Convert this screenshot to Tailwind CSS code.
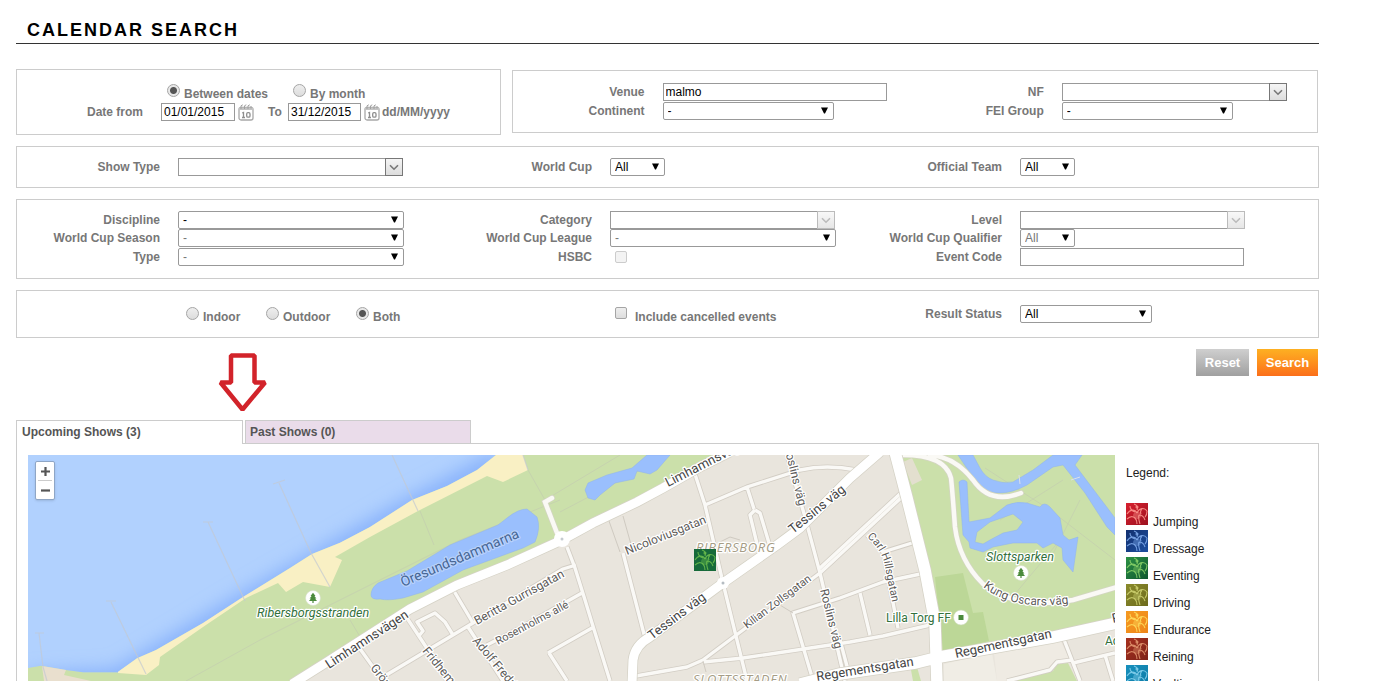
<!DOCTYPE html>
<html lang="en">
<head>
<meta charset="utf-8">
<meta name="viewport" content="width=device-width, initial-scale=1">
<title>Calendar Search</title>
<script src="https://cdn.jsdelivr.net/npm/@tailwindcss/browser@4"></script>
</head>
<body class="h-screen overflow-hidden bg-white pl-4 pr-[62px] font-['Liberation_Sans',Arial,sans-serif] text-xs text-black">

<!-- shared symbols -->
<svg class="hidden" aria-hidden="true">
  <symbol id="tri" viewBox="0 0 7 7"><path d="M0 .5h7L4 6.500H3z" fill="#000"/></symbol>
  <symbol id="chev" viewBox="0 0 10 7"><path d="M1 1.2l4 4 4-4" fill="none" stroke="currentColor" stroke-width="1.6"/></symbol>
  <symbol id="cal" viewBox="0 0 16 18">
    <rect x="1" y="4.500" width="14" height="12.500" rx="2" fill="#fff" stroke="#a8a8a8" stroke-width="1.300"/>
    <path d="M1 4.500h14v2.500H1z" fill="#c4c4c4"/>
    <path d="M3 6V2.800l1.800-1M6.500 6V2.800l1.800-1M10 6V2.800l1.800-1M13 5.500V3" fill="none" stroke="#a0a0a0" stroke-width="1"/>
    <path d="M4.200 10l1.300-.6V14.500M4 14.500h3" fill="none" stroke="#8e8e8e" stroke-width="1.300"/>
    <rect x="8.700" y="9.700" width="3.300" height="4.500" rx="1.200" fill="none" stroke="#8e8e8e" stroke-width="1.300"/>
  </symbol>
  <symbol id="rider" viewBox="0 0 22 22">
    <path d="M1 11C4 6 9 6 11 10M11 10C13 5 18 4 21 8M21 8c0 3-1 5-2 6M1 16c3-3 6-3 8-1s2 4 2 6M8 1c3 1 4 3 3 6M4 3c0 3 2 5 5 6M13 12c3 0 5 2 6 5M13 12c-1 3 0 6 1 9M16 6c-2 2-2 3-1 5" fill="none" stroke="currentColor" stroke-width="1.100" stroke-opacity=".85"/>
    <path d="M7 12c1-4 7-4 8-1s-2 5-4 5-4-1-4-4z" fill="currentColor" opacity=".4"/>
    <circle cx="11" cy="4" r="1.600" fill="currentColor" opacity=".7"/>
  </symbol>
  <symbol id="tree" viewBox="0 0 16 16">
    <circle cx="8" cy="8" r="7.500" fill="#fff" stroke="#d5dfc8" stroke-width=".6"/>
    <path d="M8 2.800L10.500 6H9.400l2 2.600H10L12 11H8.600v2H7.400v-2H4l2-2.400H4.600l2-2.600H5.500z" fill="#4b8a3c"/>
  </symbol>
</svg>

<h1 class="border-b border-[#333] pt-[18px] pb-px pl-[11px] text-lg leading-6 font-bold tracking-[2px] uppercase">Calendar Search</h1>

<form class="pt-[25px] font-bold text-[#777]" onsubmit="return false">
  <div class="flex items-start gap-[11px]">
    <fieldset class="flex-[484_1_0] border border-[#ccc] pt-[14px] pb-[13px]">
      <div class="flex h-[18px] pl-[150px]">
        <label class="flex w-[126px] gap-1 leading-5"><input type="radio" name="mode" checked class="mt-0 size-[13px] shrink-0 appearance-none rounded-full border border-[#a5a5a5] bg-linear-to-b from-[#eee] to-[#ddd] checked:bg-[radial-gradient(#555_0_3px,#e8e8e8_4px)]"><span class="whitespace-nowrap">Between dates</span></label>
        <label class="flex gap-1 leading-5"><input type="radio" name="mode" class="size-[13px] shrink-0 appearance-none rounded-full border border-[#a5a5a5] bg-linear-to-b from-[#eee] to-[#ddd] checked:bg-[radial-gradient(#555_0_3px,#e8e8e8_4px)]"><span class="whitespace-nowrap">By month</span></label>
      </div>
      <div class="flex h-[19px] items-center">
        <label for="from" class="w-[126px] text-right">Date from</label>
        <input id="from" value="01/01/2015" class="ml-[18px] h-[18px] w-[74px] border border-[#999] pl-0.5 font-normal text-black">
        <button type="button" aria-label="Pick start date" class="ml-[3px]"><svg class="h-[18px] w-4"><use href="#cal"/></svg></button>
        <label for="to" class="ml-3.5 w-5">To</label>
        <input id="to" value="31/12/2015" class="h-[18px] w-[73px] border border-[#999] pl-0.5 font-normal text-black">
        <button type="button" aria-label="Pick end date" class="ml-[3px]"><svg class="h-[18px] w-4"><use href="#cal"/></svg></button>
        <span class="ml-0.5">dd/MM/yyyy</span>
      </div>
    </fieldset>

    <fieldset class="mt-px mr-px grid flex-[807_1_0] grid-cols-[399fr_405fr] gap-y-px border border-[#ccc] py-3">
      <div class="flex h-[18px] items-center gap-[18px]"><label for="venue" class="w-[132px] text-right">Venue</label><input id="venue" value="malmo" class="h-[18px] w-56 border border-[#999] pl-0.5 font-normal text-black"></div>
      <div class="flex h-[18px] items-center gap-[18px]"><label for="nf" class="w-[132px] text-right">NF</label><span class="flex"><input id="nf" class="h-[18px] w-[207px] border border-r-0 border-[#999] px-0.5 font-normal text-black"><button type="button" aria-label="Open NF list" class="flex h-[18px] w-[18px] items-center justify-center border border-[#777] bg-linear-to-b from-[#f5f5f5] to-[#ddd] text-[#777]"><svg class="h-[7px] w-2.5"><use href="#chev"/></svg></button></span></div>
      <div class="flex h-[18px] items-center gap-[18px]"><label for="cont" class="w-[132px] text-right">Continent</label><span class="relative flex"><select id="cont" class="h-[18px] w-[171px] appearance-none rounded-xs border border-[#999] bg-white pl-1 font-normal text-black"><option>-</option></select><svg class="pointer-events-none absolute top-[5px] right-[6px] size-[7px]"><use href="#tri"/></svg></span></div>
      <div class="flex h-[18px] items-center gap-[18px]"><label for="fei" class="w-[132px] text-right">FEI Group</label><span class="relative flex"><select id="fei" class="h-[18px] w-[171px] appearance-none rounded-xs border border-[#999] bg-white pl-1 font-normal text-black"><option>-</option></select><svg class="pointer-events-none absolute top-[5px] right-[6px] size-[7px]"><use href="#tri"/></svg></span></div>
    </fieldset>
  </div>

  <fieldset class="mt-[11px] grid grid-cols-[432fr_410fr_459fr] border border-[#ccc] py-[11px]">
    <div class="flex h-[18px] items-center gap-[18px]"><label for="show" class="w-[143px] text-right">Show Type</label><span class="flex"><input id="show" class="h-[18px] w-[207px] border border-r-0 border-[#999] px-0.5 font-normal text-black"><button type="button" aria-label="Open show type list" class="flex h-[18px] w-[18px] items-center justify-center border border-[#777] bg-linear-to-b from-[#f5f5f5] to-[#ddd] text-[#777]"><svg class="h-[7px] w-2.5"><use href="#chev"/></svg></button></span></div>
    <div class="flex h-[18px] items-center gap-[18px]"><label for="wc" class="w-[143px] text-right">World Cup</label><span class="relative flex"><select id="wc" class="h-[18px] w-[55px] appearance-none rounded-xs border border-[#999] bg-white pl-1 font-normal text-black"><option>All</option></select><svg class="pointer-events-none absolute top-[5px] right-[6px] size-[7px]"><use href="#tri"/></svg></span></div>
    <div class="flex h-[18px] items-center gap-[18px]"><label for="team" class="w-[143px] text-right">Official Team</label><span class="relative flex"><select id="team" class="h-[18px] w-[55px] appearance-none rounded-xs border border-[#999] bg-white pl-1 font-normal text-black"><option>All</option></select><svg class="pointer-events-none absolute top-[5px] right-[6px] size-[7px]"><use href="#tri"/></svg></span></div>
  </fieldset>

  <fieldset class="mt-[11px] grid grid-cols-[432fr_410fr_459fr] grid-rows-[18px_19px_18px] border border-[#ccc] pt-[11px] pb-3">
    <div class="flex h-[18px] items-center gap-[18px]"><label for="disc" class="w-[143px] text-right">Discipline</label><span class="relative flex"><select id="disc" class="h-[18px] w-[226px] appearance-none rounded-xs border border-[#999] bg-white pl-1 font-normal text-black"><option>-</option></select><svg class="pointer-events-none absolute top-[5px] right-[6px] size-[7px]"><use href="#tri"/></svg></span></div>
    <div class="flex h-[18px] items-center gap-[18px]"><label for="cat" class="w-[143px] text-right">Category</label><span class="flex"><input id="cat" disabled class="h-[18px] w-[207px] border border-r-0 border-[#999] px-0.5 font-normal text-black"><button type="button" disabled aria-label="Open category list" class="flex h-[18px] w-[18px] items-center justify-center border border-[#bbb] bg-linear-to-b from-[#f8f8f8] to-[#e6e6e6] text-[#bbb]"><svg class="h-[7px] w-2.5"><use href="#chev"/></svg></button></span></div>
    <div class="flex h-[18px] items-center gap-[18px]"><label for="level" class="w-[143px] text-right">Level</label><span class="flex"><input id="level" disabled class="h-[18px] w-[207px] border border-r-0 border-[#999] px-0.5 font-normal text-black"><button type="button" disabled aria-label="Open level list" class="flex h-[18px] w-[18px] items-center justify-center border border-[#bbb] bg-linear-to-b from-[#f8f8f8] to-[#e6e6e6] text-[#bbb]"><svg class="h-[7px] w-2.5"><use href="#chev"/></svg></button></span></div>
    <div class="flex h-[18px] items-center gap-[18px]"><label for="season" class="w-[143px] text-right">World Cup Season</label><span class="relative flex"><select id="season" disabled class="h-[18px] w-[226px] appearance-none rounded-xs border border-[#999] bg-white pl-1 font-normal text-[#777]"><option>-</option></select><svg class="pointer-events-none absolute top-[5px] right-[6px] size-[7px]"><use href="#tri"/></svg></span></div>
    <div class="flex h-[18px] items-center gap-[18px]"><label for="league" class="w-[143px] text-right">World Cup League</label><span class="relative flex"><select id="league" disabled class="h-[18px] w-[226px] appearance-none rounded-xs border border-[#999] bg-white pl-1 font-normal text-[#777]"><option>-</option></select><svg class="pointer-events-none absolute top-[5px] right-[6px] size-[7px]"><use href="#tri"/></svg></span></div>
    <div class="flex h-[18px] items-center gap-[18px]"><label for="qual" class="w-[143px] text-right">World Cup Qualifier</label><span class="relative flex"><select id="qual" disabled class="h-[18px] w-[55px] appearance-none rounded-xs border border-[#999] bg-white pl-1 font-normal text-[#777]"><option>All</option></select><svg class="pointer-events-none absolute top-[5px] right-[6px] size-[7px]"><use href="#tri"/></svg></span></div>
    <div class="flex h-[18px] items-center gap-[18px]"><label for="type" class="w-[143px] text-right">Type</label><span class="relative flex"><select id="type" disabled class="h-[18px] w-[226px] appearance-none rounded-xs border border-[#999] bg-white pl-1 font-normal text-[#777]"><option>-</option></select><svg class="pointer-events-none absolute top-[5px] right-[6px] size-[7px]"><use href="#tri"/></svg></span></div>
    <div class="flex h-[18px] items-center gap-[18px]"><label for="hsbc" class="w-[143px] text-right">HSBC</label><input id="hsbc" type="checkbox" disabled class="ml-[5px] size-3 appearance-none rounded-xs border border-[#ccc] bg-[#f3f3f3]"></div>
    <div class="flex h-[18px] items-center gap-[18px]"><label for="code" class="w-[143px] text-right">Event Code</label><input id="code" class="h-[18px] w-56 border border-[#999] px-0.5 font-normal text-black"></div>
  </fieldset>

  <fieldset class="mt-[11px] grid grid-cols-[432fr_410fr_459fr] border border-[#ccc] pt-[14px] pb-[14px]">
    <div class="flex h-[18px] items-start pt-0.5 pl-[169px] leading-5">
      <label class="flex w-20 gap-1"><input type="radio" name="place" class="size-[13px] shrink-0 appearance-none rounded-full border border-[#a5a5a5] bg-linear-to-b from-[#eee] to-[#ddd] checked:bg-[radial-gradient(#555_0_3px,#e8e8e8_4px)]">Indoor</label>
      <label class="flex w-[90px] gap-1"><input type="radio" name="place" class="size-[13px] shrink-0 appearance-none rounded-full border border-[#a5a5a5] bg-linear-to-b from-[#eee] to-[#ddd] checked:bg-[radial-gradient(#555_0_3px,#e8e8e8_4px)]">Outdoor</label>
      <label class="flex gap-1"><input type="radio" name="place" checked class="size-[13px] shrink-0 appearance-none rounded-full border border-[#a5a5a5] bg-linear-to-b from-[#eee] to-[#ddd] checked:bg-[radial-gradient(#555_0_3px,#e8e8e8_4px)]">Both</label>
    </div>
    <div class="flex h-[18px] items-start pt-0.5 pl-[166px] leading-5">
      <label class="flex gap-2"><input type="checkbox" class="size-3 shrink-0 appearance-none rounded-xs border border-[#a5a5a5] bg-linear-to-b from-[#eee] to-[#ddd]">Include cancelled events</label>
    </div>
    <div class="flex h-[18px] items-center gap-[18px]"><label for="status" class="w-[143px] text-right">Result Status</label><span class="relative flex"><select id="status" class="h-[18px] w-[132px] appearance-none rounded-xs border border-[#999] bg-white pl-1 font-normal text-black"><option>All</option></select><svg class="pointer-events-none absolute top-[5px] right-[6px] size-[7px]"><use href="#tri"/></svg></span></div>
  </fieldset>

  <div class="mt-[11px] mr-px flex justify-end gap-2 text-[13px] text-white">
    <button type="reset" class="h-[27px] w-[53px] bg-linear-to-b from-[#cfcfcf] to-[#a0a0a0]">Reset</button>
    <button type="submit" class="h-[27px] w-[61px] bg-linear-to-b from-[#fdb022] to-[#fb6e1a]">Search</button>
  </div>
</form>

<div class="relative mt-11">
  <svg class="absolute -top-[67px] left-[201px] h-[60px] w-[52px]" viewBox="0 0 52 60" aria-hidden="true"><path d="M14 2.500h23.500V29.500H48L25.500 56.500 3.500 29.500H14z" fill="#fff" stroke="#d2232a" stroke-width="4.500" stroke-linejoin="bevel"/></svg>
  <div role="tablist" class="relative -mb-px flex items-start gap-0.5 font-bold text-[#555]">
    <button role="tab" aria-selected="true" class="flex h-6 w-[227px] border border-b-0 border-[#ccc] bg-white pl-[5px] leading-[22px]">Upcoming Shows (3)</button>
    <button role="tab" aria-selected="false" class="flex h-6 w-[226px] border border-[#ccc] bg-[#eadcea] pl-1 leading-[22px]">Past Shows (0)</button>
  </div>

  <section class="flex gap-[11px] border border-[#ccc] pt-[11px] pl-[11px]">
    <div class="relative h-[226px] min-w-0 flex-1">
      <svg class="h-full w-full font-['Roboto',sans-serif]" viewBox="28 455 1087 226" preserveAspectRatio="xMinYMin slice" role="img" aria-label="Map of Malmö">
        <defs>
          <clipPath id="sea"><path d="M28 455V668L41 665.700 66 670 83 672.300H118L137 658.300 156 650 203 623 243 597 290 568 312 554 340 542.700 370 527 412 500 447 486 477 470 496 455z"/></clipPath>
          <filter id="soft" x="-20%" y="-50%" width="140%" height="200%"><feGaussianBlur stdDeviation="9"/></filter>
          <path id="carl" d="M867 537Q880 548 884 562L894 612"/>
          <path id="kung" d="M983 587Q1014 612 1072 603"/>
        </defs>
        <rect x="28" y="455" width="1087" height="226" fill="#e9e5dd"/>
        <!-- parkland -->
        <path d="M28 640L500 440H735L700 467 663 488 593 523 507 565 457 585 410 608 327 662 296 681H28z" fill="#cbe0aa"/>
        <path d="M900 455H1115V622L940 656 925 570z" fill="#cbe0aa"/>
        <path d="M935 577L963 573 973 613 983 612 989 641 943 652z" fill="#bcd797"/>
        <path d="M903 462L912 458 922 480 912 485z" fill="#e3dfcf"/>
        <path d="M1013 681L1053 671 1057 664 1068 663 1077 681zM911 670L917 667 921 681H913z" fill="#cbe0aa"/>
        <path d="M944 664L992 653 997 681H944z" fill="#f0ede5"/>
        <path d="M994 652L1060 640 1070 660 1054 663 1048 671 1005 681H997z" fill="#efebe3"/>
        <!-- sea -->
        <path d="M28 455V668L41 665.700 66 670 83 672.300H118L137 658.300 156 650 203 623 243 597 290 568 312 554 340 542.700 370 527 412 500 447 486 477 470 496 455z" fill="#b1d1fe"/>
        <g clip-path="url(#sea)"><path d="M28 684L118 680 243 605 412 508 500 462" fill="none" stroke="#86b0fb" stroke-width="22" filter="url(#soft)"/></g>
        <!-- beach -->
        <path d="M496 455H523L528 470 503 482 487 476 418 511 370 537 335 557 342 560 330 587 303 582 286 592 278 583 246 598 203 627 160 657 159 665 146 675 118 673 118 671.700 137 658.300 156 650 203 623 243 597 290 568 312 554 340 542.700 370 527 412 500 447 486 477 470z" fill="#f9f0c4"/>
        <path d="M42 666L66 670 64 675 91 681H44z" fill="#e9dfce"/>
        <!-- paths in the park -->
        <g fill="none" stroke="#c6d3ae" stroke-width="1">
          <path d="M186 681L260 640 340 600 460 540 560 500M420 511L434 545M528 470L545 500 620 455M560 512L640 470M350 620L362 640"/>
          <path d="M985 468L1050 510 1115 560M1063 480L1000 520M1010 600L1060 540M1080 500L1050 560"/>
        </g>
        <g fill="none" stroke="#c3c9d2" stroke-width="1.200" opacity=".7">
          <path d="M35 633H44M39 633L43 667 47 681M106 601H116M111 602L146 674M203 522H213M208 522L245 601M273 484L285 480M279 483L311 553 330 587M392 455L418 511M523 455L528 470"/>
        </g>
        <!-- lakes and canal -->
        <g fill="#9abffd" stroke="#8fb2ec" stroke-width=".5">
          <path d="M371 595Q371 588 378 583L407 571 450 545 498 525 507 518Q518 509 527 509L537 517Q541 528 535 542L523 548 463 570 423 592 403 598Q388 601 380 599 371 600 371 595z"/>
          <path d="M585 490L588 483 607 475 632 468 647 455H670L657 470 650 474 637 471 634 479 615 483 600 495 595 500 588 498z"/>
          <path d="M958 455H973L980 468Q985 477 993 480 1003 484 1013 482L1033 470 1053 455H1082L1075 465 1115 518V535L1107 527 1085 493 1063 465 1053 467 1027 485Q1012 493 1000 493 990 493 983 488L968 470z"/>
          <path fill-rule="evenodd" d="M959 482Q963 478 967 482L969 522 990 518 1007 505Q1016 501 1027 503L1040 507Q1044 501 1050 507L1060 518 1063 535 1069 540 1078 537 1073 572 1063 560 1062 548 1053 543 1043 548 1037 543H1013L993 547 983 552 970 548 969 542 963 535zM975 542L983 544 990 540 1003 533 1017 530 1023 522 1013 514 990 522 977 532z"/>
        </g>
        <path d="M1019 475L1020 484M1071 480L1080 477" stroke="#d9e0ea" fill="none"/>

        <!-- minor streets: casing, then surface -->
        <g id="streets" fill="none" stroke="#d2cdc4" stroke-width="5" stroke-linejoin="round">
          <path id="net" d="M407 618L430 653 447 681M454 591L473 623M383 677L453 635 473 623 563 569 576 565M358 646L373 667 387 680M418 637L423 631 417 622 435 613 445 622 453 635M468 627L503 681M487 645L520 628 582 593M548 653L592 628M549 653L567 681M567 547L575 568 585 600 592 623 610 681M623 553L645 638M693 468L705 505 717 557 723 583 747 681M705 505L747 487 800 470Q826 464 857 470M747 487L754 509M755 510L750 515 758 548M755 510L760 513 769 543M787 455L805 517 820 573 845 681M636 676L687 667 703 660 747 627 820 573 902 497M820 568L902 492M703 662L743 658 850 642 883 636 930 625M925 573L883 582 840 598 793 613 812 677M860 593L870 635M883 552L912 543M867 535L883 552 898 628M840 640L848 670M1063 637L1080 681M1073 663L1115 653M1105 655L1113 681M1007 681L1050 670 1057 662 1072 660"/>
        </g>
        <use href="#net" fill="none" stroke="#faf9f6" stroke-width="3.400" stroke-linejoin="round"/>
        <path d="M609 521L620 552M623 516L632 548M775 602L793 613M718 543L730 537 740 540M703 661L706 672" fill="none" stroke="#cfcac1"/>
        <g fill="none" stroke="#d3d5c2" stroke-width="6" stroke-linecap="round">
          <path id="walk" d="M903 455Q945 455 951 478 952 486 955 527 959 560 983 584 1015 610 1073 600L1117 587M930 455Q955 457 973 480 990 505 1021 493M557 533L545 502 552 498"/>
        </g>
        <use href="#walk" fill="none" stroke="#faf9f5" stroke-width="4.500" stroke-linecap="round"/>

        <!-- main roads -->
        <g fill="none" stroke="#d5d2c6" stroke-width="10.500">
          <path id="main" d="M292 684L327 662 410 609 457 585 507 565 562 540 593 523 637 502 663 488 700 467 730 452M632 684L633 660Q635 645 650 637L723 583 777 545 800 528 850 478 880 452"/>
        </g>
        <path d="M895 452L907 498 925 570 935 623 937 684M800 684L840 674 915 663 940 657 1053 637 1117 623" fill="none" stroke="#d5d2c6" stroke-width="13"/>
        <path d="M895 452L907 498 925 570 935 623 937 684M800 684L840 674 915 663 940 657 1053 637 1117 623" fill="none" stroke="#fff" stroke-width="11.500"/>
        <use href="#main" fill="none" stroke="#fff" stroke-width="9"/>
        <circle cx="562" cy="539" r="8" fill="#fff"/><circle cx="562" cy="539" r="1.500" fill="#c5cbd0"/>
        <circle cx="723" cy="583" r="6" fill="#fff"/><circle cx="723" cy="583" r="1.500" fill="#b5bcc2"/>

        <!-- labels -->
        <g fill="#5c5a57" stroke="#fff" stroke-width="2.500" stroke-linejoin="round" paint-order="stroke" font-size="12">
          <g font-size="13" fill="#444">
            <text transform="translate(329 669) rotate(-33)">Limhamnsvägen</text>
            <text transform="translate(668 487) rotate(-27)">Limhamnsvägen</text>
            <text transform="translate(652 640) rotate(-37)">Tessins väg</text>
            <text transform="translate(793 534) rotate(-39)">Tessins väg</text>
            <text transform="translate(956 658) rotate(-12)">Regementsgatan</text>
            <text transform="translate(817 681) rotate(-9)">Regementsgatan</text>
            <text transform="translate(1113 623) rotate(-12)">Regementsgatan</text>
          </g>
          <text transform="translate(477 625) rotate(-29)" font-size="12">Beritta Gurrisgatan</text>
          <text transform="translate(498 645) rotate(-28)" font-size="11">Rosenholms allé</text>
          <text transform="translate(472 641) rotate(50)">Adolf Fredriksgatan</text>
          <text transform="translate(422 651) rotate(51)">Fridhemsgatan</text>
          <text transform="translate(370 668) rotate(52)">Gröntorgsgatan</text>
          <text transform="translate(627 555) rotate(-22)" font-size="12">Nicoloviusgatan</text>
          <text transform="translate(747 629) rotate(-37)" font-size="11">Kilian Zollsgatan</text>
          <text transform="translate(820 590) rotate(76)" font-size="12">Roslins väg</text>
          <text transform="translate(784 447) rotate(76)" font-size="12">Roslins väg</text>
          <text font-size="11"><textPath href="#carl">Carl Hillsgatan</textPath></text>
          <text font-size="12"><textPath href="#kung">Kung Oscars väg</textPath></text>
          <text transform="translate(403 587) rotate(-23)" font-size="14" fill="#456594" stroke="#b9d2fb">Öresundsdammarna</text>
          <g fill="#a69d86" font-style="italic" font-size="13" class="font-['Open_Sans',sans-serif] tracking-wider"><text x="696" y="552">RIBERSBORG</text><text x="693" y="684">SLOTTSSTADEN</text></g>
          <g fill="#33713c" font-style="italic" font-size="12.500"><text x="257" y="617">Ribersborgsstranden</text><text x="986" y="561">Slottsparken</text></g>
          <g fill="#33713c" font-size="12"><text x="886" y="622">Lilla Torg FF</text><text x="1105" y="645">Admiralen</text></g>
        </g>
        <use href="#tree" x="305" y="590" width="16" height="16"/>
        <use href="#tree" x="1013" y="565" width="16" height="16"/>
        <circle cx="961" cy="617.500" r="7.500" fill="#fff" stroke="#c9d8b5" stroke-width=".6"/><rect x="958.500" y="615" width="5" height="5" fill="#4b8a3c"/>
        <!-- event marker -->
        <rect x="694" y="549" width="22" height="22" fill="#176a3a"/>
        <use href="#rider" x="694" y="549" width="22" height="22" color="#6fc04d"/>
      </svg>
      <div class="absolute top-1.5 left-[7px] flex w-5 flex-col items-center rounded-xs border border-[#8fa6c6] bg-white shadow-sm">
        <button aria-label="Zoom in" class="flex h-[18px] w-full items-center justify-center"><svg class="size-[9px]" viewBox="0 0 9 9"><path d="M4.500 0v9M0 4.500h9" stroke="#555" stroke-width="2.200"/></svg></button>
        <span class="h-px w-3.5 bg-[#ccc]"></span>
        <button aria-label="Zoom out" class="flex h-[18px] w-full items-center justify-center"><svg class="size-[9px]" viewBox="0 0 9 9"><path d="M0 4.500h9" stroke="#555" stroke-width="2.200"/></svg></button>
      </div>
    </div>

    <aside class="w-[192px] pt-2.5 text-[#222]">
      <h2 class="mb-[22px] leading-4">Legend:</h2>
      <ul class="flex flex-col gap-[3px] leading-4">
        <li class="flex h-6 gap-[5px]"><svg class="size-[22px] bg-linear-to-br from-[#d8202f] to-[#9c1220] text-[#ff9a90]"><use href="#rider"/></svg><span class="pt-[11px]">Jumping</span></li>
        <li class="flex h-6 gap-[5px]"><svg class="size-[22px] bg-linear-to-br from-[#12306f] to-[#1d4fa0] text-[#82aef0]"><use href="#rider"/></svg><span class="pt-[11px]">Dressage</span></li>
        <li class="flex h-6 gap-[5px]"><svg class="size-[22px] bg-linear-to-br from-[#2c9144] to-[#0f5730] text-[#8cd46a]"><use href="#rider"/></svg><span class="pt-[11px]">Eventing</span></li>
        <li class="flex h-6 gap-[5px]"><svg class="size-[22px] bg-linear-to-br from-[#8a8b2c] to-[#6d6b1d] text-[#d0d472]"><use href="#rider"/></svg><span class="pt-[11px]">Driving</span></li>
        <li class="flex h-6 gap-[5px]"><svg class="size-[22px] bg-linear-to-br from-[#f59a22] to-[#ee861a] text-[#ffe060]"><use href="#rider"/></svg><span class="pt-[11px]">Endurance</span></li>
        <li class="flex h-6 gap-[5px]"><svg class="size-[22px] bg-linear-to-br from-[#a6301f] to-[#7d2318] text-[#e59a72]"><use href="#rider"/></svg><span class="pt-[11px]">Reining</span></li>
        <li class="flex h-6 gap-[5px]"><svg class="size-[22px] bg-linear-to-br from-[#1790bd] to-[#0f7ba6] text-[#8ad4f0]"><use href="#rider"/></svg><span class="pt-[11px]">Vaulting</span></li>
      </ul>
    </aside>
  </section>
</div>
</body>
</html>
